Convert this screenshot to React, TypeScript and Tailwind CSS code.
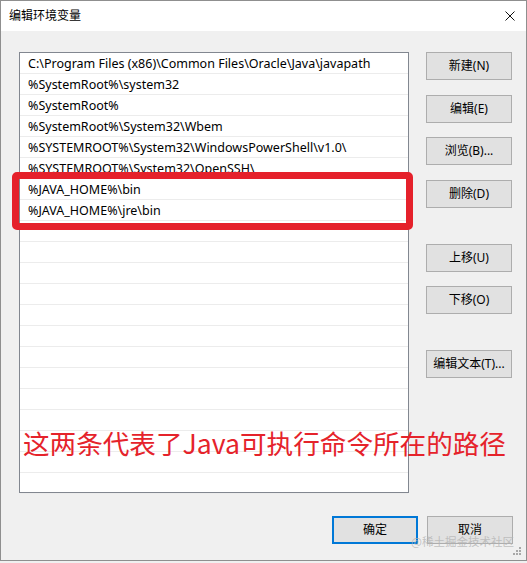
const PATHS = [
  'C:\\Program Files (x86)\\Common Files\\Oracle\\Java\\javapath',
  '%SystemRoot%\\system32',
  '%SystemRoot%',
  '%SystemRoot%\\System32\\Wbem',
  '%SYSTEMROOT%\\System32\\WindowsPowerShell\\v1.0\\',
  '%SYSTEMROOT%\\System32\\OpenSSH\\',
  '%JAVA_HOME%\\bin',
  '%JAVA_HOME%\\jre\\bin',
];

const ROW_COUNT = 21;

function Btn({ label, className = '' }: { label: string; className?: string }) {
  return (
    <div
      className={`flex h-[28px] w-[86px] items-center justify-center border border-[#adadad] bg-[#e1e1e1] text-[12px] text-black ${className}`}
    >
      {label}
    </div>
  );
}

export default function App() {
  const rows = Array.from({ length: ROW_COUNT }, (_, i) => PATHS[i] ?? '');

  return (
    <div className="relative h-[563px] w-[527px] overflow-hidden bg-[#f0f0f0] font-['Noto_Sans','Noto_Sans_CJK_SC',sans-serif] text-black">
      <div className="flex h-[561px] flex-col border border-[#8f8f8f]">
        {/* title bar */}
        <div className="flex h-[30px] shrink-0 items-center justify-between bg-white pl-[8px] pr-[11px]">
          <span className="text-[12px]">编辑环境变量</span>
          <svg width="10" height="10" viewBox="0 0 10 10">
            <path d="M0.5 0.5 L9.5 9.5 M9.5 0.5 L0.5 9.5" stroke="#111" strokeWidth="1" />
          </svg>
        </div>

        {/* body */}
        <div className="flex pl-[18px] pt-[21px]">
          <div className="h-[441px] w-[390px] border border-[#828790] bg-white">
            {rows.map((text, i) => (
              <div
                key={i}
                className="flex h-[21px] items-center border-b border-[#ececec] pl-[8px] pt-[2px] text-[12.5px] leading-none whitespace-nowrap"
              >
                {text}
              </div>
            ))}
          </div>

          <div className="ml-[17px] flex flex-col">
            <Btn label="新建(N)" />
            <Btn label="编辑(E)" className="mt-[15px]" />
            <Btn label="浏览(B)..." className="mt-[14px]" />
            <Btn label="删除(D)" className="mt-[15px]" />
            <Btn label="上移(U)" className="mt-[36px]" />
            <Btn label="下移(O)" className="mt-[14px]" />
            <Btn label="编辑文本(T)..." className="mt-[36px]" />
          </div>
        </div>

        <div className="mt-[23px] flex justify-end gap-[9px] pr-[13px]">
          <div className="flex h-[28px] w-[86px] items-center justify-center border-2 border-[#0078d7] bg-[#e1e1e1] text-[12px]">
            确定
          </div>
          <Btn label="取消" />
        </div>
      </div>

      {/* annotation */}
      <div className="absolute left-[12px] top-[172px] h-[58px] w-[401px] rounded-[5px] border-[7px] border-[#e5212b]" />
      <div className="absolute left-[23px] top-[424px] whitespace-nowrap font-['Noto_Sans_CJK_SC',sans-serif] text-[26.6px] leading-[38px] text-[#e5232b]">
        这两条代表了Java可执行命令所在的路径
      </div>

      {/* watermark */}
      <div className="absolute left-[411px] top-[533px] whitespace-nowrap font-['Noto_Sans_CJK_SC',sans-serif] text-[11.5px] leading-[16px] text-[#b4b4b4]/80">
        @稀土掘金技术社区
      </div>

      {/* resize grip */}
      <svg className="absolute left-[513px] top-[547px]" width="9" height="9" viewBox="0 0 9 9">
        <g fill="#a8a8a8">
          <rect x="6" y="0" width="2" height="2" />
          <rect x="3" y="3" width="2" height="2" />
          <rect x="6" y="3" width="2" height="2" />
          <rect x="0" y="6" width="2" height="2" />
          <rect x="3" y="6" width="2" height="2" />
          <rect x="6" y="6" width="2" height="2" />
        </g>
      </svg>
    </div>
  );
}
